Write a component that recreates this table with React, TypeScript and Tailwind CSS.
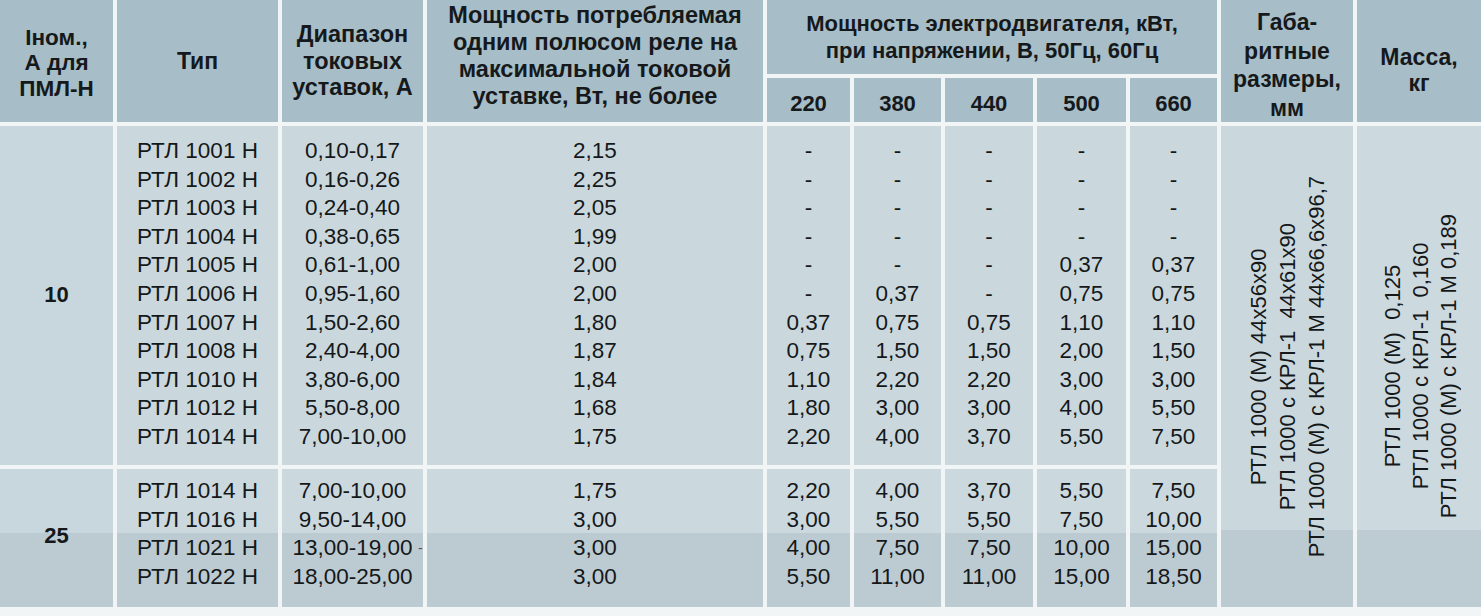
import React from "react";

const types10 = [
  "РТЛ 1001 Н",
  "РТЛ 1002 Н",
  "РТЛ 1003 Н",
  "РТЛ 1004 Н",
  "РТЛ 1005 Н",
  "РТЛ 1006 Н",
  "РТЛ 1007 Н",
  "РТЛ 1008 Н",
  "РТЛ 1010 Н",
  "РТЛ 1012 Н",
  "РТЛ 1014 Н",
];
const ranges10 = [
  "0,10-0,17",
  "0,16-0,26",
  "0,24-0,40",
  "0,38-0,65",
  "0,61-1,00",
  "0,95-1,60",
  "1,50-2,60",
  "2,40-4,00",
  "3,80-6,00",
  "5,50-8,00",
  "7,00-10,00",
];
const power10 = ["2,15", "2,25", "2,05", "1,99", "2,00", "2,00", "1,80", "1,87", "1,84", "1,68", "1,75"];
const motor10 = [
  ["-", "-", "-", "-", "-", "-", "0,37", "0,75", "1,10", "1,80", "2,20"],
  ["-", "-", "-", "-", "-", "0,37", "0,75", "1,50", "2,20", "3,00", "4,00"],
  ["-", "-", "-", "-", "-", "-", "0,75", "1,50", "2,20", "3,00", "3,70"],
  ["-", "-", "-", "-", "0,37", "0,75", "1,10", "2,00", "3,00", "4,00", "5,50"],
  ["-", "-", "-", "-", "0,37", "0,75", "1,10", "1,50", "3,00", "5,50", "7,50"],
];

const types25 = ["РТЛ 1014 Н", "РТЛ 1016 Н", "РТЛ 1021 Н", "РТЛ 1022 Н"];
const ranges25 = ["7,00-10,00", "9,50-14,00", "13,00-19,00", "18,00-25,00"];
const power25 = ["1,75", "3,00", "3,00", "3,00"];
const motor25 = [
  ["2,20", "3,00", "4,00", "5,50"],
  ["4,00", "5,50", "7,50", "11,00"],
  ["3,70", "5,50", "7,50", "11,00"],
  ["5,50", "7,50", "10,00", "15,00"],
  ["7,50", "10,00", "15,00", "18,50"],
];

// header cell base, font size and leading set per cell
const head = "bg-[#a7bdc7] flex flex-col items-center justify-center text-center font-bold text-[#15191b]";
const body1 = "bg-[#cad8dd] pt-[11px] flex flex-col items-center text-[22.5px] leading-[28.6px]";
const body2 =
  "bg-[linear-gradient(to_bottom,#cbd8de_0px,#cbd8de_64px,#bccbd2_64px)] pt-[8px] flex flex-col items-center text-[22.5px] leading-[28.6px]";

function Lines({ items }: { items: string[] }) {
  return (
    <>
      {items.map((t, i) => (
        <span key={i}>{t}</span>
      ))}
    </>
  );
}

export default function App() {
  return (
    <div className="w-[1481px] h-[616px] overflow-hidden bg-[#f2f5f5] font-['Liberation_Sans',Arial,sans-serif] text-[#15181a]">
      <div className="grid grid-cols-[113px_161px_141px_336px_83px_87px_88px_89px_87px_132px_124px] grid-rows-[74px_44px_339px_138px] gap-[4px]">
        {/* header */}
        <div className={`${head} row-span-2 text-[22.5px] leading-[25.5px] pt-[4px]`}>
          <span>Іном.,</span>
          <span>А для</span>
          <span>ПМЛ-Н</span>
        </div>
        <div className={`${head} row-span-2 text-[23px]`}>Тип</div>
        <div className={`${head} row-span-2 text-[23.5px] leading-[26.5px]`}>
          <span>Диапазон</span>
          <span>токовых</span>
          <span>уставок, А</span>
        </div>
        <div className={`${head} row-span-2 pb-[10px] text-[23.5px] leading-[27px]`}>
          <span>Мощность потребляемая</span>
          <span>одним полюсом реле на</span>
          <span>максимальной токовой</span>
          <span>уставке, Вт, не более</span>
        </div>
        <div className={`${head} col-span-5 text-[22px] leading-[27px]`}>
          <span>Мощность электродвигателя, кВт,</span>
          <span>при напряжении, В, 50Гц, 60Гц</span>
        </div>
        <div className={`${head} row-span-2 text-[23px] leading-[28.5px] pt-[8px]`}>
          <span>Габа-</span>
          <span>ритные</span>
          <span>размеры,</span>
          <span>мм</span>
        </div>
        <div className={`${head} row-span-2 text-[23px] leading-[26.5px] pt-[18px]`}>
          <span>Масса,</span>
          <span>кг</span>
        </div>
        {["220", "380", "440", "500", "660"].map((v) => (
          <div key={v} className={`${head} text-[22px] pt-[6px]`}>
            {v}
          </div>
        ))}

        {/* group 10 */}
        <div className="bg-[#c8d7dd] flex items-center justify-center font-bold text-[22px] pb-[2px]">10</div>
        <div className={body1}>
          <Lines items={types10} />
        </div>
        <div className={body1}>
          <Lines items={ranges10} />
        </div>
        <div className={body1}>
          <Lines items={power10} />
        </div>
        {motor10.map((col, i) => (
          <div key={i} className={body1}>
            <Lines items={col} />
          </div>
        ))}
        <div className="row-span-2 bg-[linear-gradient(to_bottom,#cad8dd_0px,#cad8dd_404px,#bccbd2_404px)] flex items-center justify-center">
          <div className="[writing-mode:vertical-rl] rotate-180 text-center text-[22px] leading-[29px] whitespace-pre">
            <div>РТЛ 1000 (М) 44х56х90</div>
            <div>РТЛ 1000 с КРЛ-1  44х61х90</div>
            <div>РТЛ 1000 (М) с КРЛ-1 М 44х66,6х96,7</div>
          </div>
        </div>
        <div className="row-span-2 bg-[linear-gradient(to_bottom,#ccd9de_0px,#ccd9de_404px,#bdccd3_404px)] flex items-center justify-center">
          <div className="[writing-mode:vertical-rl] rotate-180 text-center text-[22px] leading-[28px] whitespace-pre pr-[4px]">
            <div>РТЛ 1000 (М)  0,125</div>
            <div>РТЛ 1000 с КРЛ-1  0,160</div>
            <div>РТЛ 1000 (М) с КРЛ-1 М 0,189</div>
          </div>
        </div>

        {/* group 25 */}
        <div className="bg-[linear-gradient(to_bottom,#c8d7dd_0px,#c8d7dd_64px,#bccbd2_64px)] flex items-center justify-center font-bold text-[22px] pb-[6px]">
          25
        </div>
        <div className={body2}>
          <Lines items={types25} />
        </div>
        <div className={body2}>
          {ranges25.map((t, i) => (
            <span key={i} className="relative">
              {t}
              {i === 2 && <span className="absolute -right-[10px] top-0 text-[14px] text-[#555]">-</span>}
            </span>
          ))}
        </div>
        <div className={body2}>
          <Lines items={power25} />
        </div>
        {motor25.map((col, i) => (
          <div key={i} className={body2}>
            <Lines items={col} />
          </div>
        ))}
      </div>
    </div>
  );
}
